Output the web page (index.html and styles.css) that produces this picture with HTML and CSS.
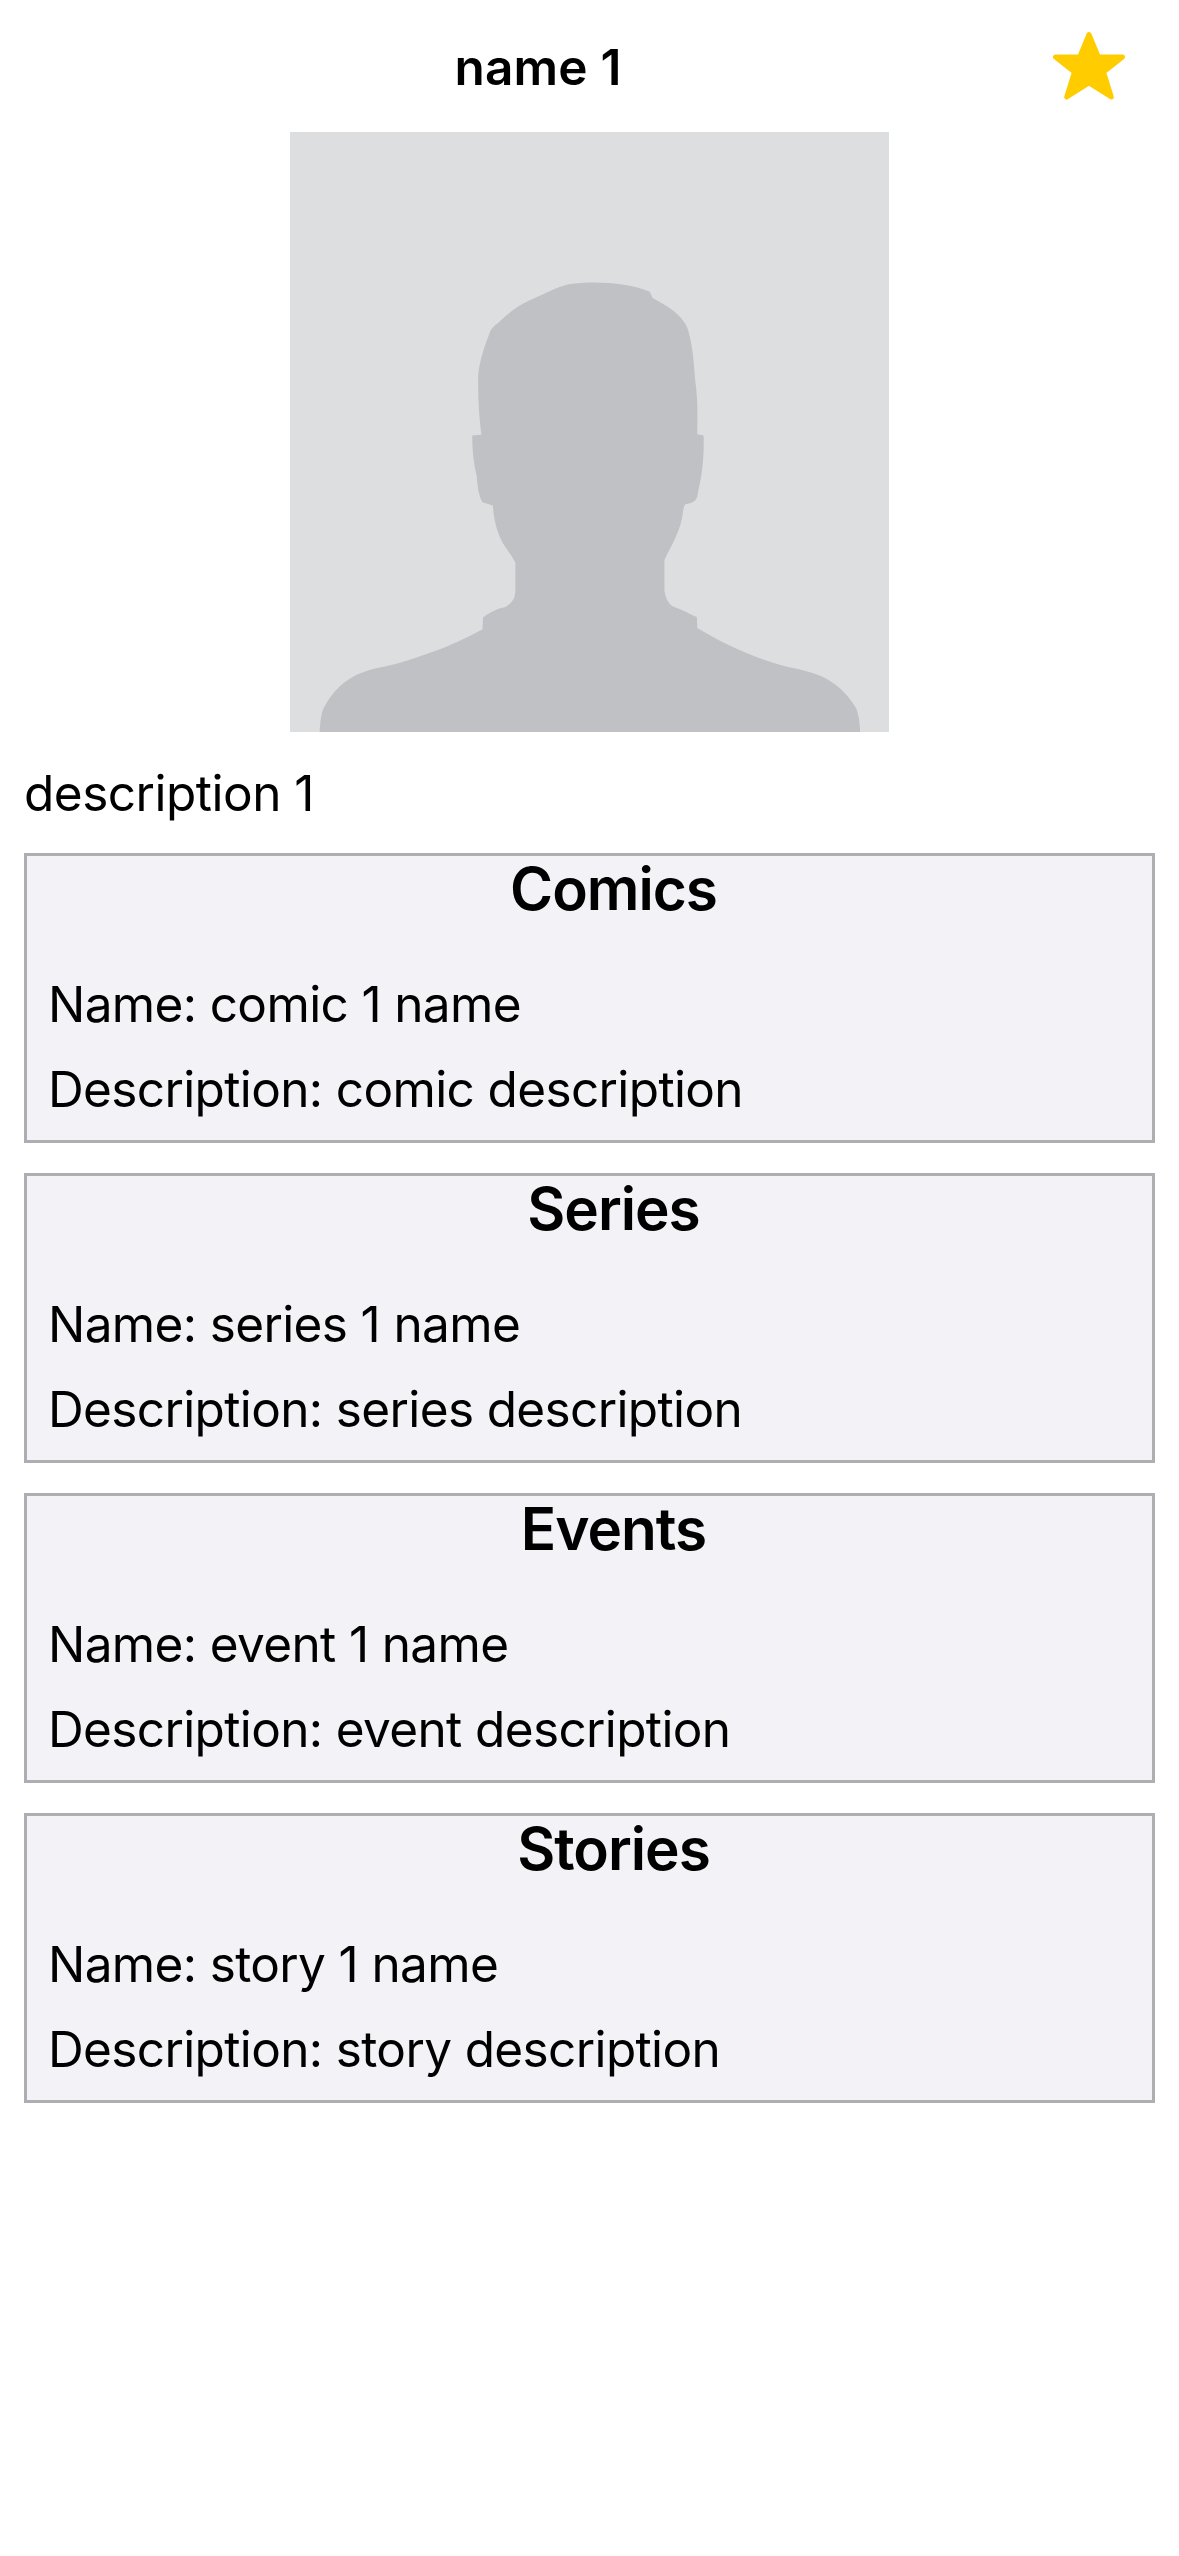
FILE: index.html
```html
<!DOCTYPE html>
<html lang="en">
<head>
<meta charset="utf-8">
<title>name 1</title>
<link rel="stylesheet" href="styles.css">
</head>
<body>
<main class="screen">
  <header class="header">
    <h1 class="title">name 1</h1>
    <svg class="star" viewBox="0 0 74 72" aria-label="Favorite">
      <path d="M37 4.5L46.3 27H70.5L51.5 42L59.3 67L37 53L14.7 67L22.5 42L3.5 27H27.7Z"/>
    </svg>
  </header>
  <svg class="avatar" viewBox="25 30 1515 1518" preserveAspectRatio="none" aria-label="Portrait">
    <rect class="avatar-bg" x="25" y="30" width="1515" height="1518"/>
    <path class="avatar-person" d="M100 1548C102 1520 103 1503 110 1488C130 1448 165 1412 210 1397C250 1383 280 1382 320 1368C400 1342 455 1320 512 1288L513 1258C535 1243 548 1237 570 1232C592 1217 595 1207 595 1185V1120C580 1090 562 1075 552 1045C543 1020 540 1000 538 975L512 967C502 950 500 930 497 900C489 865 486 835 486 798L509 796C503 750 500 700 501 645C505 605 518 570 532 533C540 520 550 515 560 505C590 478 610 465 640 452C680 434 700 422 730 415C800 406 880 412 935 434L942 450C975 468 1015 490 1030 525C1044 570 1046 610 1050 660C1056 700 1056 740 1055 795L1071 798C1073 850 1067 900 1058 935C1054 965 1050 966 1025 972C1018 980 1020 1000 1012 1025C1000 1060 988 1080 972 1113V1190C976 1215 985 1230 1005 1235C1025 1242 1035 1250 1054 1257L1055 1285C1130 1330 1200 1360 1270 1380C1320 1392 1350 1396 1385 1415C1420 1436 1442 1462 1458 1490C1464 1510 1466 1525 1467 1548Z"/>
  </svg>
  <p class="summary">description 1</p>
  <div class="cards">
    <section class="card">
      <h2 class="card-title">Comics</h2>
      <p class="row">Name: comic 1 name</p>
      <p class="row">Description: comic description</p>
    </section>
    <section class="card">
      <h2 class="card-title">Series</h2>
      <p class="row">Name: series 1 name</p>
      <p class="row">Description: series description</p>
    </section>
    <section class="card">
      <h2 class="card-title">Events</h2>
      <p class="row">Name: event 1 name</p>
      <p class="row">Description: event description</p>
    </section>
    <section class="card">
      <h2 class="card-title">Stories</h2>
      <p class="row">Name: story 1 name</p>
      <p class="row">Description: story description</p>
    </section>
  </div>
</main>
</body>
</html>
```
FILE: styles.css
```css
* { box-sizing: border-box; margin: 0; padding: 0; }
body {
  background: #fff;
  color: #000;
  font-family: Inter, "Liberation Sans", sans-serif;
  font-size: 49.5px;
}
.screen { display: flex; flex-direction: column; min-height: 2556px; }
.header { display: flex; align-items: center; height: 132px; padding: 0 53px 0 24px; }
.title { flex: 1; text-align: center; font-size: 49.5px; font-weight: 600; line-height: 60px; letter-spacing: 0.2px; padding-top: 2px; }
.star { width: 74px; height: 72px; }
.star path { fill: #ffcc00; stroke: #ffcc00; stroke-width: 5; stroke-linejoin: round; }
.avatar { width: 599px; height: 600px; align-self: center; }
.avatar-bg { fill: #dddee0; }
.avatar-person { fill: #c0c1c4; }
.summary { margin: 29px 24px 0; line-height: 64px; height: 92px; letter-spacing: -0.5px; }
.cards { display: flex; flex-direction: column; gap: 30px; padding: 0 24px; }
.card { height: 290px; border: 3px solid #aeaeb2; background: #f2f2f7; padding-left: 21px; }
.card-title { width: 1131px; text-align: center; font-size: 58.5px; font-weight: 600; line-height: 65px; letter-spacing: -1px; margin-bottom: 53px; margin-right: -24px; }
.row { line-height: 60px; margin-bottom: 25px; letter-spacing: -0.63px; }
```
